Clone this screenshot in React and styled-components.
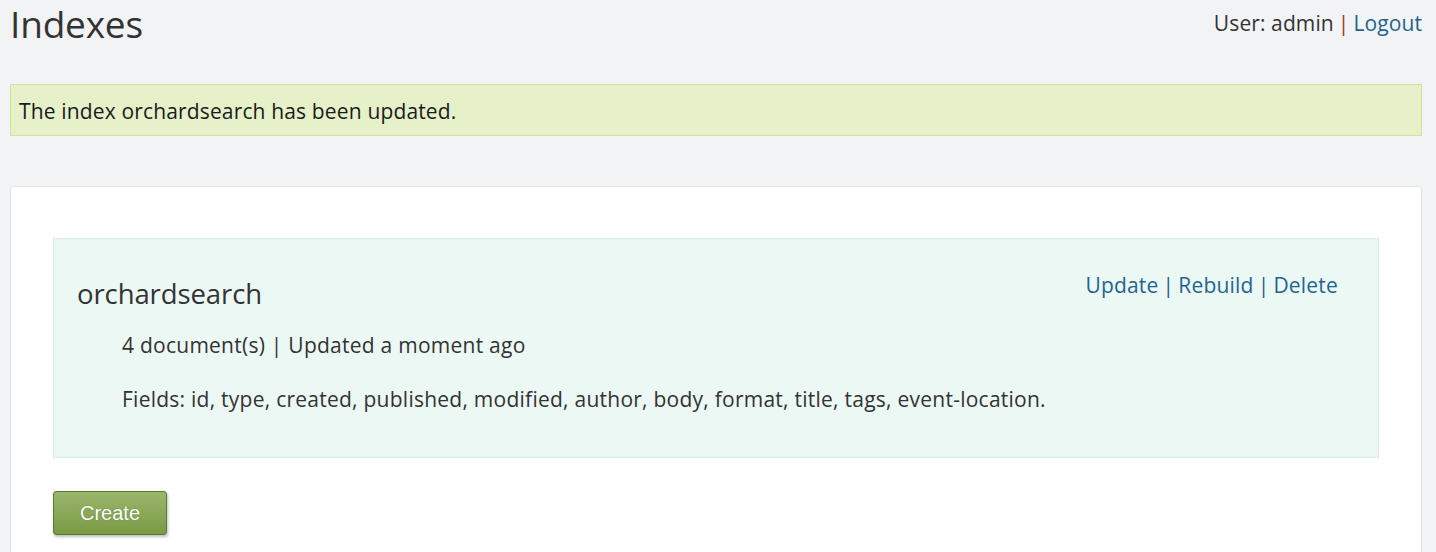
import React from "react";
import styled, { createGlobalStyle } from "styled-components";

const Global = createGlobalStyle`
  html, body { margin: 0; padding: 0; }
  body {
    background: #f2f3f5;
    font-family: "Open Sans", "Noto Sans", sans-serif;
    color: #333;
  }
`;

const Page = styled.div`
  padding: 0 14px 0 10px;
`;

const Header = styled.header`
  display: flex;
  justify-content: space-between;
  align-items: flex-start;
  height: 84px;
`;

const Title = styled.h1`
  margin: 0;
  padding-top: 1px;
  font-size: 37px;
  font-weight: 400;
  line-height: 46px;
  color: #333;
  letter-spacing: -0.2px;
`;

const UserBar = styled.div`
  font-size: 21px;
  line-height: 26px;
  padding-top: 10px;
  color: #333;
  letter-spacing: 0.1px;
`;

const Sep = styled.span`
  color: ${(p) => p.$color || "#333"};
  margin: 0 4px;
`;

const Link = styled.a`
  color: #1f6491;
  text-decoration: none;
`;

const Message = styled.div`
  background: #e6f1ca;
  border: 1px solid #cde3a0;
  height: 52px;
  box-sizing: border-box;
  display: flex;
  align-items: center;
  padding: 1px 8px 0;
  font-size: 21px;
  letter-spacing: 0.15px;
  color: #1b1b1b;
  margin-bottom: 50px;
`;

const Card = styled.section`
  background: #fff;
  border: 1px solid #e2e3e5;
  border-radius: 4px;
  padding: 51px 42px 40px 42px;
  min-height: 400px;
`;

const IndexPanel = styled.div`
  background: #ecf8f4;
  border: 1px solid #dce9e4;
  padding: 33px 40px 40px 23px;
  height: 220px;
  box-sizing: border-box;
  margin-bottom: 33px;
`;

const PanelTop = styled.div`
  display: flex;
  justify-content: space-between;
  align-items: flex-start;
`;

const IndexName = styled.h2`
  margin: 0;
  padding-top: 4px;
  font-size: 27.5px;
  font-weight: 400;
  line-height: 36px;
  color: #333;
  letter-spacing: -0.1px;
`;

const Actions = styled.div`
  font-size: 21px;
  line-height: 26px;
  color: #1f6491;
  letter-spacing: 0.2px;
`;

const Meta = styled.p`
  margin: ${(p) => p.$mt}px 0 0 45px;
  font-size: 21px;
  line-height: 26px;
  letter-spacing: 0.25px;
  color: #333;
`;

const CreateButton = styled.button`
  width: 114px;
  height: 44px;
  border: 1px solid #577a2b;
  border-radius: 3px;
  background: linear-gradient(#9bb66c, #7a9a45);
  color: #fff;
  font-family: "Liberation Sans", Arial, sans-serif;
  font-size: 20px;
  text-shadow: 0 0 1px rgba(60, 90, 30, 0.6);
  box-shadow: 1px 2px 3px rgba(0, 0, 0, 0.25);
  cursor: pointer;
`;

export default function App() {
  return (
    <>
      <Global />
      <Page>
        <Header>
          <Title>Indexes</Title>
          <UserBar>
            User: admin<Sep $color="#a0342a">|</Sep>
            <Link href="#">Logout</Link>
          </UserBar>
        </Header>
        <Message>The index orchardsearch has been updated.</Message>
        <Card>
          <IndexPanel>
            <PanelTop>
              <IndexName>orchardsearch</IndexName>
              <Actions>
                <Link href="#">Update</Link>
                <Sep $color="#1f6491">|</Sep>
                <Link href="#">Rebuild</Link>
                <Sep $color="#1f6491">|</Sep>
                <Link href="#">Delete</Link>
              </Actions>
            </PanelTop>
            <Meta $mt={20}>4 document(s) | Updated a moment ago</Meta>
            <Meta $mt={28}>
              Fields: id, type, created, published, modified, author, body,
              format, title, tags, event-location.
            </Meta>
          </IndexPanel>
          <CreateButton>Create</CreateButton>
        </Card>
      </Page>
    </>
  );
}
